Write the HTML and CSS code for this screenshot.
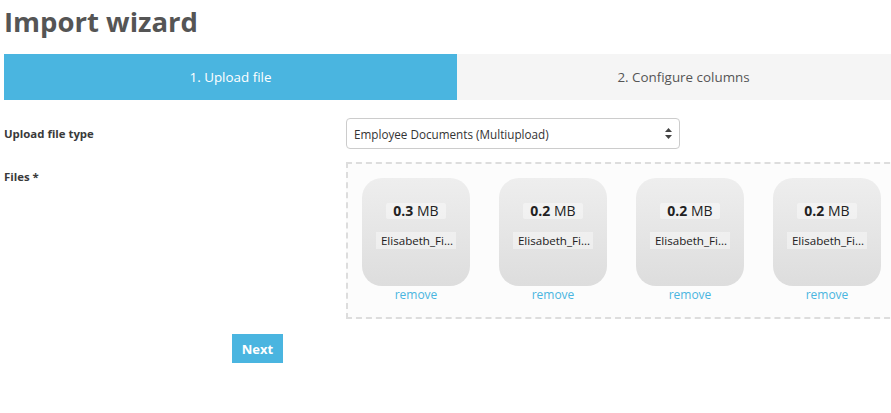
FILE: index.html
```html
<!DOCTYPE html>
<html>
<head>
<meta charset="utf-8">
<link rel="stylesheet" href="styles.css">
</head>
<body>
<div class="page">
  <h1 class="title">Import wizard</h1>
  <div class="tabs">
    <div class="tab active">1. Upload file</div>
    <div class="tab">2. Configure columns</div>
  </div>
  <div class="form">
    <div class="row row-type">
      <label class="label">Upload file type</label>
      <div class="select">
        <span>Employee Documents (Multiupload)</span>
        <svg class="arrows" width="7" height="11" viewBox="0 0 7 11"><path d="M3.5 0 L7 4 L0 4 Z M0 7 L7 7 L3.5 11 Z" fill="#444"/></svg>
      </div>
    </div>
    <div class="row row-files">
      <label class="label">Files *</label>
      <div class="dropzone">
        <div class="preview">
          <div class="thumb">
            <div class="size"><strong>0.3</strong> MB</div>
            <div class="name">Elisabeth_Fi...</div>
          </div>
          <a class="remove">remove</a>
        </div>
        <div class="preview">
          <div class="thumb">
            <div class="size"><strong>0.2</strong> MB</div>
            <div class="name">Elisabeth_Fi...</div>
          </div>
          <a class="remove">remove</a>
        </div>
        <div class="preview">
          <div class="thumb">
            <div class="size"><strong>0.2</strong> MB</div>
            <div class="name">Elisabeth_Fi...</div>
          </div>
          <a class="remove">remove</a>
        </div>
        <div class="preview">
          <div class="thumb">
            <div class="size"><strong>0.2</strong> MB</div>
            <div class="name">Elisabeth_Fi...</div>
          </div>
          <a class="remove">remove</a>
        </div>
      </div>
    </div>
    <div class="actions">
      <button class="btn">Next</button>
    </div>
  </div>
</div>
</body>
</html>
```

FILE: styles.css
```css
html, body {
  margin: 0;
  padding: 0;
  background: #fff;
  overflow: hidden;
}
body {
  font-family: "Open Sans", "Noto Sans", sans-serif;
  color: #333;
}
.page {
  width: 906px;
  padding-left: 4px;
}
.title {
  margin: 0;
  padding-top: 2px;
  height: 52px;
  font-size: 27.5px;
  line-height: 40px;
  font-weight: 700;
  color: #555;
}
.tabs {
  display: grid;
  grid-template-columns: 1fr 1fr;
  height: 46px;
}
.tab {
  display: flex;
  align-items: center;
  justify-content: center;
  background: #f5f5f5;
  color: #555;
  font-size: 13.4px;
}
.tab.active {
  background: #4ab5e0;
  color: #fff;
}
.form {
  padding-top: 18px;
}
.row {
  display: grid;
  grid-template-columns: 342px 1fr;
}
.label {
  font-size: 11.4px;
  font-weight: 700;
  color: #3a3a3a;
}
.row-type .label {
  line-height: 31px;
}
.row-type {
  margin-bottom: 13px;
}
.select {
  height: 29px;
  border: 1px solid #ccc;
  border-radius: 4px;
  display: flex;
  align-items: center;
  justify-content: space-between;
  padding: 0 7px 0 7px;
  box-sizing: content-box;
  width: 318px;
  font-size: 11.7px;
  color: #333;
}
.arrows {
  display: block;
}
.row-files .label {
  padding-top: 8px;
  line-height: 14px;
}
.dropzone {
  border: 2px dashed #ddd;
  background: #fcfcfc;
  padding: 14px 0 0 14px;
  display: flex;
  gap: 29px;
  box-sizing: border-box;
  height: 157px;
}
.preview {
  width: 108px;
  display: flex;
  flex-direction: column;
  align-items: center;
}
.thumb {
  width: 108px;
  height: 108px;
  border-radius: 20px;
  background: linear-gradient(to bottom, #eeeeee, #dddddd);
  display: flex;
  flex-direction: column;
  align-items: center;
  padding-top: 25px;
  box-sizing: border-box;
}
.size {
  background: rgba(255,255,255,0.4);
  font-size: 14px;
  line-height: 16px;
  padding: 0 7px;
  border-radius: 2px;
  color: #222;
}
.size strong {
  font-weight: 700;
}
.name {
  margin-top: 13px;
  background: rgba(255,255,255,0.4);
  font-size: 11.6px;
  line-height: 17px;
  padding: 0 3px 0 5px;
  color: #222;
}
.remove {
  font-size: 12px;
  color: #4ab5e0;
  line-height: 18px;
  margin-top: 0;
}
.actions {
  padding-top: 15px;
  padding-left: 228px;
}
.btn {
  border: 0;
  background: #4ab5e0;
  color: #fff;
  font-family: "Open Sans", "Noto Sans", sans-serif;
  font-size: 13px;
  font-weight: 700;
  width: 51px;
  height: 29px;
  padding: 0;
  border-radius: 0;
}
```
